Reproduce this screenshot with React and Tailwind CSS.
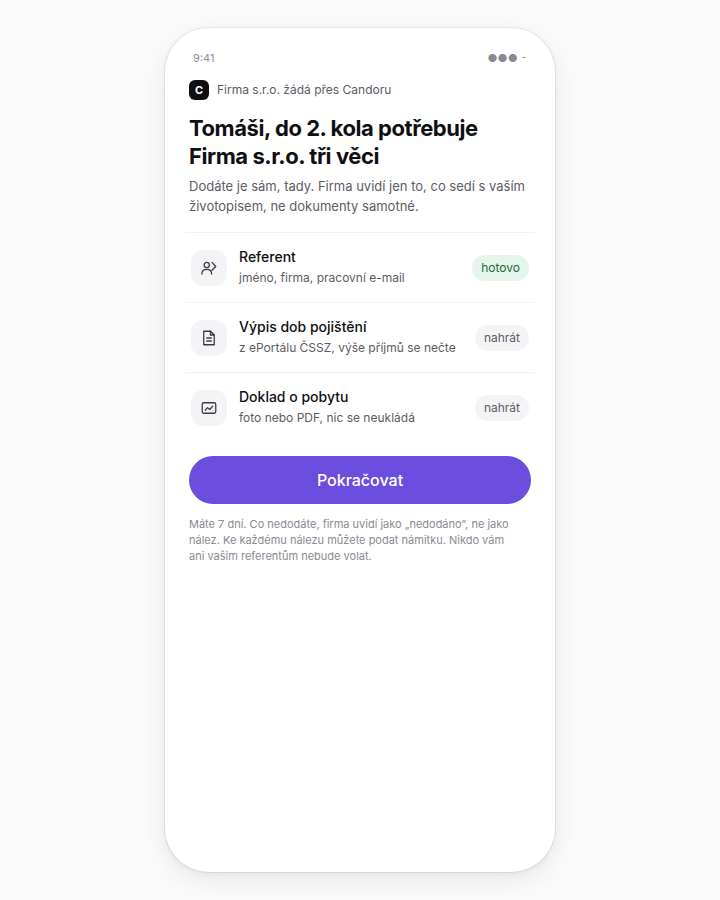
import React from 'react';

const ITEMS = [
  {
    id: 'referent',
    title: 'Referent',
    detail: 'jméno, firma, pracovní e-mail',
    status: 'hotovo',
    icon: ReferenceIcon,
  },
  {
    id: 'vypis',
    title: 'Výpis dob pojištění',
    detail: 'z ePortálu ČSSZ, výše příjmů se nečte',
    status: 'nahrát',
    icon: DocumentIcon,
  },
  {
    id: 'doklad',
    title: 'Doklad o pobytu',
    detail: 'foto nebo PDF, nic se neukládá',
    status: 'nahrát',
    icon: PermitIcon,
  },
];

function Icon({ children }) {
  return (
    <svg
      className="size-[18px]"
      viewBox="0 0 24 24"
      fill="none"
      stroke="currentColor"
      strokeWidth="1.7"
      strokeLinecap="round"
      strokeLinejoin="round"
      aria-hidden="true"
    >
      {children}
    </svg>
  );
}

function ReferenceIcon() {
  return (
    <Icon>
      <circle cx="9" cy="8" r="3.5" />
      <path d="M2.5 20c0-3.8 2.8-6.2 6.5-6.2s6.5 2.4 6.5 6.2" />
      <path d="M16 4.5l5 5.5-5 5" />
    </Icon>
  );
}

function DocumentIcon() {
  return (
    <Icon>
      <path d="M5 3h9l5 5v13H5z" />
      <path d="M14 3v5h5M9 12h6M9 16h6" />
    </Icon>
  );
}

function PermitIcon() {
  return (
    <Icon>
      <rect x="3" y="5" width="18" height="14" rx="2" />
      <path d="M7 15l3-3.5 3 2.5 4-4.5" />
    </Icon>
  );
}

const StatusPill = ({ status }) => {
  if (status === 'hotovo') {
    return (
      <span className="shrink-0 rounded-full bg-[#e6f5ec] px-[9px] py-1 text-xs leading-[18px] text-[#1d6b41]">
        {status}
      </span>
    );
  }

  return (
    <button
      type="button"
      className="shrink-0 rounded-full bg-[#f4f4f6] px-[9px] py-1 text-xs leading-[18px] text-[#5c5c64]"
    >
      {status}
    </button>
  );
};

const App = () => {
  return (
    <div className="flex min-h-screen items-center justify-center bg-[#fafafa] px-4 py-7 font-['Inter',sans-serif] text-[#0f0f12]">
      <main className="min-h-[844px] w-full max-w-[390px] rounded-[44px] bg-white px-6 py-5 shadow-[0_0_0_1px_rgba(0,0,0,0.06),0_2px_6px_rgba(0,0,0,0.05),0_8px_24px_rgba(0,0,0,0.07)]">
        {/* Status bar */}
        <div className="flex items-center justify-between px-1 text-[11px] leading-5 text-[#8a8a94]">
          <span>9:41</span>
          <span>●●● ⁃</span>
        </div>

        {/* Who is asking */}
        <header className="mt-3 flex items-center gap-2 text-xs text-[#5c5c64]">
          <span className="flex size-5 items-center justify-center rounded-md bg-[#0f0f12] text-[11px] font-bold text-white">
            C
          </span>
          <span>Firma s.r.o. žádá přes Candoru</span>
        </header>

        <h1 className="mt-3.5 text-[22px] leading-7 font-bold tracking-[-0.02em]">
          Tomáši, do 2. kola potřebuje Firma s.r.o. tři věci
        </h1>
        <p className="mt-1.5 text-[13px] leading-5 text-[#5c5c64]">
          Dodáte je sám, tady. Firma uvidí jen to, co sedí s vaším životopisem, ne dokumenty samotné.
        </p>

        {/* Requested items */}
        <ul className="-mx-1 mt-4">
          {ITEMS.map(({ id, title, detail, status, icon: ItemIcon }) => (
            <li key={id} className="flex h-[70px] items-center gap-3 border-t border-[#f1f1f3] px-1.5">
              <span className="flex size-9 shrink-0 items-center justify-center rounded-xl bg-[#f4f4f6] text-[#3a3a42]">
                <ItemIcon />
              </span>
              <div className="min-w-0 flex-1">
                <p className="text-sm leading-5 font-medium">{title}</p>
                <p className="text-xs leading-[22px] text-[#5c5c64]">{detail}</p>
              </div>
              <StatusPill status={status} />
            </li>
          ))}
        </ul>

        <button
          type="button"
          className="mt-3.5 h-12 w-full rounded-full bg-[#6b4ddf] text-base font-medium text-white"
        >
          Pokračovat
        </button>
        <p className="mt-3 pr-3 text-[11px] leading-4 text-[#8a8a94]">
          Máte 7 dní. Co nedodáte, firma uvidí jako „nedodáno”, ne jako nález. Ke každému nálezu
          můžete podat námitku. Nikdo vám ani vašim referentům nebude volat.
        </p>
      </main>
    </div>
  );
};

export default App;
